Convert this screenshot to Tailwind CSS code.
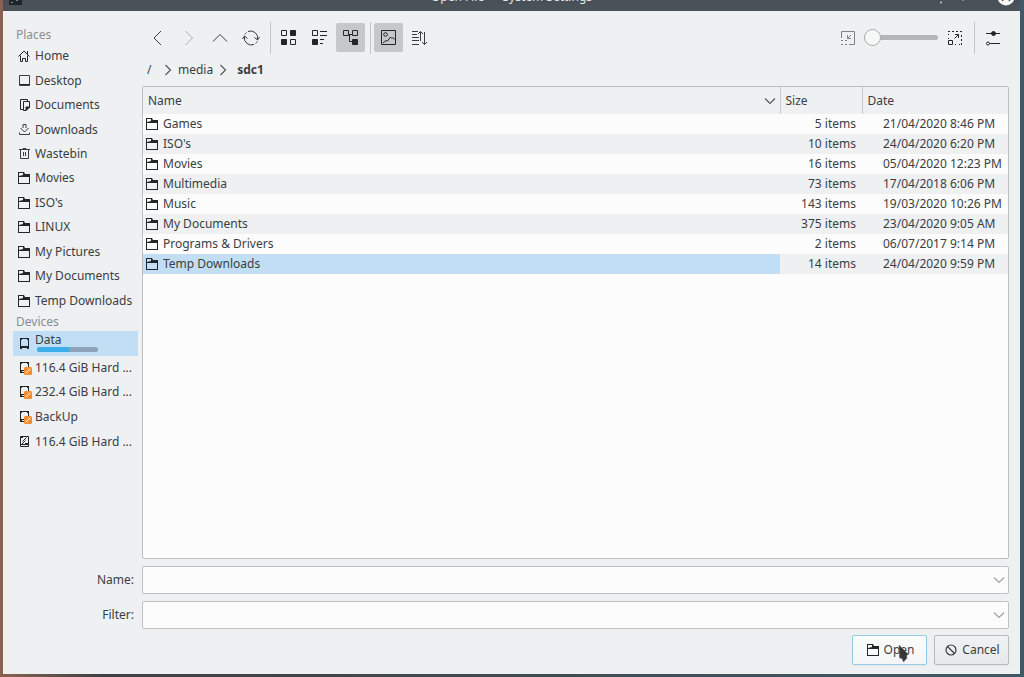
<!DOCTYPE html>
<html lang="en">
<head>
    <meta charset="UTF-8">
    <meta name="viewport" content="width=device-width, initial-scale=1.0">
    <title>Open File — System Settings</title>
    <script src="https://cdn.jsdelivr.net/npm/@tailwindcss/browser@4"></script>
</head>
<body class="h-screen overflow-hidden flex flex-col bg-linear-to-r from-[#8a6251] from-0% via-[#3f4043] via-10% to-[#3f5a66] pl-[3px] pr-1 pb-[3px] font-['Noto_Sans',sans-serif] text-[12px] leading-[18px] text-[#3a3e42]">

    <!-- Shared icons -->
    <svg class="hidden">
        <symbol id="folder" viewBox="0 0 16 16">
            <path fill="#232629" fill-rule="evenodd" d="M2 2h6l1 2h5v10H2zM3 3v3l4-1V3zM3 7v6h10V7z"/>
        </symbol>
        <symbol id="chevron-right" viewBox="0 0 16 16">
            <path fill="none" stroke="#55595c" stroke-width="1.200" d="M5.500 3l5 5-5 5"/>
        </symbol>
        <symbol id="chevron-down" viewBox="0 0 16 16">
            <path fill="none" stroke="currentColor" stroke-width="1.200" d="M3 5.500l5 5 5-5"/>
        </symbol>
        <symbol id="drive" viewBox="0 0 16 16">
            <path fill="none" stroke="#232629" d="M4.500 3.500h8v9h-8z"/>
            <path fill="#232629" d="M4 3h2v2H4zM11 3h2v2h-2zM4 11h9v1H4zM4 12h2v2H4zM11 12h2v2h-2z"/>
        </symbol>
        <symbol id="drive-unmounted" viewBox="0 0 16 16">
            <path fill="none" stroke="#232629" d="M9 12.500H4.500v-10h8V7"/>
            <path fill="#232629" d="M4 2h2v2H4zM11 2h2v2h-2zM4 10h4v1H4zM4 11h2v2H4z"/>
            <rect x="8" y="7" width="8" height="8" rx="1.500" fill="#f48a2a"/>
            <path stroke="#fde3c8" d="M9.500 13.500l5-5"/>
            <path stroke="#fde3c8" stroke-width=".800" d="M9.500 11l2.500 2.500M12 8.500l2.500 2.500"/>
        </symbol>
    </svg>

    <!-- Title bar -->
    <header class="relative h-[11px] shrink-0 overflow-hidden flex items-end justify-center pb-[5px] bg-linear-to-b from-[#475057] to-[#4b5359] text-[#e4e6e8]">
        <h1>Open File — System Settings</h1>
        <svg class="absolute left-1 top-0" width="16" height="6" viewBox="0 0 16 6">
            <path fill="#1f2528" d="M2 0h13v5H2z"/>
            <path fill="#7d868b" d="M4 2h2v1H4zM9 0h2v1H9z"/>
        </svg>
        <svg class="absolute right-1 top-0" width="84" height="8" viewBox="0 0 84 8">
            <circle cx="9" cy="2.500" r="1" fill="#c9cdd0"/>
            <circle cx="31" cy="0" r="1" fill="#9da3a7"/>
            <circle cx="74" cy="-3" r="8.500" fill="#fcfcfc"/>
            <path stroke="#4b5359" stroke-width="1.200" d="M74-3l4 4M74-3l-4 4"/>
        </svg>
    </header>

    <div class="flex-1 min-h-0 flex flex-col bg-[#eef0f2] pt-3 pl-[10px] pr-[11px] pb-[9px]">
        <div class="flex-1 min-h-0 grid grid-cols-[125px_minmax(0,1fr)] gap-x-1">

            <!-- Places -->
            <nav class="pt-[3px]">
                <h2 class="pl-[3px] text-[#8b8e91]">Places</h2>
                <ul class="h-[269px] grid auto-rows-fr">
                    <li><a href="#" class="h-full flex items-center gap-[3px] pl-[3px]">
                        <svg class="size-4" viewBox="0 0 16 16" fill="none" stroke="#232629"><path d="M2.500 8.500L8 3l5.500 5.500M4.500 7.500v6h2v-3h3v3h2v-6M11.500 3v3"/></svg>
                        Home</a></li>
                    <li><a href="#" class="h-full flex items-center gap-[3px] pl-[3px]">
                        <svg class="size-4" viewBox="0 0 16 16" fill="none" stroke="#3a3e42"><path d="M3.500 2.500h10v10h-10z"/><path stroke="#232629" d="M3 11.500h11"/></svg>
                        Desktop</a></li>
                    <li><a href="#" class="h-full flex items-center gap-[3px] pl-[3px]">
                        <svg class="size-4" viewBox="0 0 16 16" fill="none" stroke="#232629"><path d="M7 12.500H4.500v-10h7V4"/><path d="M7.500 4.500h6V10L10 13.500H7.500z"/><path fill="#232629" d="M10 13.500V10h3.500z"/></svg>
                        Documents</a></li>
                    <li><a href="#" class="h-full flex items-center gap-[3px] pl-[3px]">
                        <svg class="size-4" viewBox="0 0 16 16" fill="none" stroke="#3a3e42"><path d="M7 6V2.500h3V6M4.500 6l4 4 4-4M3.500 10.500v2h10v-2"/></svg>
                        Downloads</a></li>
                    <li><a href="#" class="h-full flex items-center gap-[3px] pl-[3px]">
                        <svg class="size-4" viewBox="0 0 16 16" fill="none" stroke="#3a3e42"><path d="M3 3.500h11M4.500 3.500v9h8v-9M7 3V2.500h3V3M7.500 6v4M9.500 6v4"/></svg>
                        Wastebin</a></li>
                    <li><a href="#" class="h-full flex items-center gap-[3px] pl-[3px]"><svg class="size-4"><use href="#folder"/></svg>Movies</a></li>
                    <li><a href="#" class="h-full flex items-center gap-[3px] pl-[3px]"><svg class="size-4"><use href="#folder"/></svg>ISO's</a></li>
                    <li><a href="#" class="h-full flex items-center gap-[3px] pl-[3px]"><svg class="size-4"><use href="#folder"/></svg>LINUX</a></li>
                    <li><a href="#" class="h-full flex items-center gap-[3px] pl-[3px]"><svg class="size-4"><use href="#folder"/></svg>My Pictures</a></li>
                    <li><a href="#" class="h-full flex items-center gap-[3px] pl-[3px]"><svg class="size-4"><use href="#folder"/></svg>My Documents</a></li>
                    <li><a href="#" class="h-full flex items-center gap-[3px] pl-[3px] whitespace-nowrap"><svg class="size-4 shrink-0"><use href="#folder"/></svg>Temp Downloads</a></li>
                </ul>
                <h2 class="pl-[3px] text-[#8b8e91]">Devices</h2>
                <ul class="h-[123px] grid auto-rows-fr">
                    <li><a href="#" class="h-full flex items-center gap-[3px] pl-[3px] bg-[#c1def4]">
                        <svg class="size-4"><use href="#drive"/></svg>
                        <span class="flex flex-col pb-0.5">
                            <span class="leading-[14px]">Data</span>
                            <span class="ml-0.5 w-[61px] h-[5px] rounded-full overflow-hidden bg-[#8fa3b8]"><span class="block h-full bg-[#3daee9]" style="width: 52%"></span></span>
                        </span></a></li>
                    <li><a href="#" class="h-full flex items-center gap-[3px] pl-[3px] whitespace-nowrap"><svg class="size-4 shrink-0"><use href="#drive-unmounted"/></svg>116.4 GiB Hard ...</a></li>
                    <li><a href="#" class="h-full flex items-center gap-[3px] pl-[3px] whitespace-nowrap"><svg class="size-4 shrink-0"><use href="#drive-unmounted"/></svg>232.4 GiB Hard ...</a></li>
                    <li><a href="#" class="h-full flex items-center gap-[3px] pl-[3px]"><svg class="size-4"><use href="#drive-unmounted"/></svg>BackUp</a></li>
                    <li><a href="#" class="h-full flex items-center gap-[3px] pl-[3px] whitespace-nowrap">
                        <svg class="size-4 shrink-0" viewBox="0 0 16 16" fill="none" stroke="#232629"><path d="M4.500 2.500h8v10h-8zM4.500 10.500h8M10.500 3.500l-4 4M9.500 6.500l-4 4"/><path d="M5 3.500h2M9 9.500h3"/></svg>
                        116.4 GiB Hard ...</a></li>
                </ul>
            </nav>

            <div class="min-h-0 flex flex-col">
                <!-- Toolbar -->
                <div class="flex items-center gap-0.5 h-[29px] pl-px pr-0.5">
                    <button aria-label="Back" class="size-[29px] grid place-items-center">
                        <svg class="size-[22px]" viewBox="0 0 22 22" fill="none" stroke="#3a3e42"><path d="M14 4l-7 7 7 7"/></svg>
                    </button>
                    <button aria-label="Forward" class="size-[29px] grid place-items-center">
                        <svg class="size-[22px]" viewBox="0 0 22 22" fill="none" stroke="#aaadaf"><path d="M7.500 4l7 7-7 7"/></svg>
                    </button>
                    <button aria-label="Up" class="size-[29px] grid place-items-center">
                        <svg class="size-[22px]" viewBox="0 0 22 22" fill="none" stroke="#3a3e42"><path d="M4 14.500l7-7 7 7"/></svg>
                    </button>
                    <button aria-label="Reload" class="size-[29px] grid place-items-center">
                        <svg class="size-[22px]" viewBox="0 0 22 22" fill="none" stroke="#3a3e42"><path d="M8 4.500A7 7 0 0 1 17.500 12.500M14 17.500A7 7 0 0 1 4.500 9.500M14.500 10.500l3 2.500 2-3M2.500 12l2-3 3 2.500"/><path d="M4.800 7.500A7 7 0 0 1 6.500 5.500M17.200 14.500A7 7 0 0 1 15.500 16.500"/></svg>
                    </button>
                    <span class="w-px h-8 ml-[3px] mr-px bg-[#c2c4c6]"></span>
                    <button aria-label="Icons view" class="size-[29px] grid place-items-center">
                        <svg class="size-[22px]" viewBox="0 0 22 22" fill="none" stroke="#232629"><path d="M3.500 3.500h5v5h-5zM12.500 12.500h5v5h-5z"/><path fill="#232629" d="M12.500 3.500h5v5h-5zM3.500 12.500h5v5h-5z"/></svg>
                    </button>
                    <button aria-label="Compact view" class="size-[29px] grid place-items-center">
                        <svg class="size-[22px]" viewBox="0 0 22 22" fill="none" stroke="#232629"><path d="M3.500 3.500h5v5h-5zM11 4.500h7M11 8.500h7M11 12.500h4M11 16.500h3"/><path fill="#232629" d="M3.500 12.500h5v5h-5z"/></svg>
                    </button>
                    <button aria-label="Details view" aria-pressed="true" class="size-[29px] grid place-items-center rounded-xs bg-[#c5c7c8]">
                        <svg class="size-[22px]" viewBox="0 0 22 22" fill="none" stroke="#232629"><path d="M3.500 3.500h5v5h-5zM12.500 3.500h5v5h-5zM8.500 7.500h4M9.500 7.500v7h3"/><path fill="#232629" d="M12.500 12.500h5v5h-5z"/></svg>
                    </button>
                    <span class="w-px h-8 ml-[3px] mr-px bg-[#c2c4c6]"></span>
                    <button aria-label="Preview" aria-pressed="true" class="size-[29px] grid place-items-center rounded-xs bg-[#c5c7c8]">
                        <svg class="size-[22px]" viewBox="0 0 22 22" fill="none" stroke="#232629"><path d="M3.500 3.500h14v14h-14z"/><circle cx="7.500" cy="7.500" r="1.800"/><path d="M5 16l3-2.500 1.500.500 3-4 1.500 1.500 1-1 1.500 2"/></svg>
                    </button>
                    <button aria-label="Sort" class="size-[29px] grid place-items-center">
                        <svg class="size-[22px]" viewBox="0 0 22 22" fill="none" stroke="#3a3e42"><path d="M3 4.500h6M3 7.500h5M3 10.500h7M3 13.500h7M3 17.500h7M11.500 14V4.500M9 7l2.500-2.500L14 7M15.500 5v12.500M13 15l2.500 2.500L18 15"/></svg>
                    </button>

                    <div class="ml-auto flex items-center">
                        <svg class="size-[22px]" viewBox="0 0 22 22" fill="none" stroke="#808386"><path d="M4.500 11V4.500h13v13H12"/><path stroke-dasharray="2 2" d="M4 13.500h6M4 17.500h6"/><path d="M14 8l-3.500 3.500M10.500 8v3.500H14"/></svg>
                        <input type="range" aria-label="Icon size" min="0" max="100" value="0" class="ml-[5px] w-[74px] h-[18px] appearance-none bg-transparent [&::-webkit-slider-runnable-track]:h-[5px] [&::-webkit-slider-runnable-track]:rounded-full [&::-webkit-slider-runnable-track]:bg-[#b4b5b6] [&::-webkit-slider-thumb]:appearance-none [&::-webkit-slider-thumb]:size-[17px] [&::-webkit-slider-thumb]:-mt-1.5 [&::-webkit-slider-thumb]:rounded-full [&::-webkit-slider-thumb]:border [&::-webkit-slider-thumb]:border-[#a9abad] [&::-webkit-slider-thumb]:bg-[#f6f7f7]">
                        <svg class="ml-1.5 size-[22px]" viewBox="0 0 22 22" fill="none" stroke="#232629"><path stroke-dasharray="2 2" d="M4 4.500h14M17.500 8v10"/><path stroke-dasharray="1 3" d="M4.500 7v5M11 17.500h5"/><path d="M4.500 13.500h4v4h-4zM10.500 11.500l4-4M11 7.500h3.500V11"/></svg>
                    </div>
                    <span class="w-px h-8 ml-1.5 mr-px bg-[#c2c4c6]"></span>
                    <button aria-label="Options" class="size-[29px] grid place-items-center">
                        <svg class="size-[22px]" viewBox="0 0 22 22" fill="none" stroke="#232629"><path d="M4 6.500h14M8 16.500h10"/><circle cx="11.500" cy="6.500" r="2" fill="#232629"/><circle cx="6" cy="16.500" r="1.500"/></svg>
                    </button>
                </div>

                <!-- Breadcrumb -->
                <nav class="flex items-center h-[34px] pl-[5px] pt-0.5">
                    <a href="#" class="w-[13px]">/</a>
                    <svg class="size-4"><use href="#chevron-right"/></svg>
                    <a href="#" class="ml-0.5">media</a>
                    <svg class="size-4 ml-0.5 mr-1.5"><use href="#chevron-right"/></svg>
                    <a href="#" class="font-bold">sdc1</a>
                </nav>

                <!-- File list -->
                <div class="flex-1 min-h-0 overflow-hidden border border-[#bcbec0] rounded-xs bg-[#fcfcfc]">
                    <table class="w-full table-fixed border-collapse whitespace-nowrap">
                        <colgroup>
                            <col>
                            <col class="w-[82px]">
                            <col class="w-[146px]">
                        </colgroup>
                        <thead>
                            <tr class="h-[27px] bg-[#eef0f2] text-left">
                                <th class="pl-[5px] pr-0.5 font-normal"><button class="w-full flex items-center justify-between">Name<svg class="size-4 text-[#55595c]"><use href="#chevron-down"/></svg></button></th>
                                <th class="pl-[5px] font-normal border-l border-[#c9cbcd]"><button>Size</button></th>
                                <th class="pl-[5px] font-normal border-l border-[#c9cbcd]"><button>Date</button></th>
                            </tr>
                        </thead>
                        <tbody>
                            <tr class="h-5 even:bg-[#eef0f2]">
                                <td class="pl-px"><div class="flex items-center gap-[3px]"><svg class="size-4"><use href="#folder"/></svg>Games</div></td>
                                <td class="text-right pr-1.5">5 items</td>
                                <td class="pl-[21px]">21/04/2020 8:46 PM</td>
                            </tr>
                            <tr class="h-5 even:bg-[#eef0f2]">
                                <td class="pl-px"><div class="flex items-center gap-[3px]"><svg class="size-4"><use href="#folder"/></svg>ISO's</div></td>
                                <td class="text-right pr-1.5">10 items</td>
                                <td class="pl-[21px]">24/04/2020 6:20 PM</td>
                            </tr>
                            <tr class="h-5 even:bg-[#eef0f2]">
                                <td class="pl-px"><div class="flex items-center gap-[3px]"><svg class="size-4"><use href="#folder"/></svg>Movies</div></td>
                                <td class="text-right pr-1.5">16 items</td>
                                <td class="pl-[21px]">05/04/2020 12:23 PM</td>
                            </tr>
                            <tr class="h-5 even:bg-[#eef0f2]">
                                <td class="pl-px"><div class="flex items-center gap-[3px]"><svg class="size-4"><use href="#folder"/></svg>Multimedia</div></td>
                                <td class="text-right pr-1.5">73 items</td>
                                <td class="pl-[21px]">17/04/2018 6:06 PM</td>
                            </tr>
                            <tr class="h-5 even:bg-[#eef0f2]">
                                <td class="pl-px"><div class="flex items-center gap-[3px]"><svg class="size-4"><use href="#folder"/></svg>Music</div></td>
                                <td class="text-right pr-1.5">143 items</td>
                                <td class="pl-[21px]">19/03/2020 10:26 PM</td>
                            </tr>
                            <tr class="h-5 even:bg-[#eef0f2]">
                                <td class="pl-px"><div class="flex items-center gap-[3px]"><svg class="size-4"><use href="#folder"/></svg>My Documents</div></td>
                                <td class="text-right pr-1.5">375 items</td>
                                <td class="pl-[21px]">23/04/2020 9:05 AM</td>
                            </tr>
                            <tr class="h-5 even:bg-[#eef0f2]">
                                <td class="pl-px"><div class="flex items-center gap-[3px]"><svg class="size-4"><use href="#folder"/></svg>Programs &amp; Drivers</div></td>
                                <td class="text-right pr-1.5">2 items</td>
                                <td class="pl-[21px]">06/07/2017 9:14 PM</td>
                            </tr>
                            <tr class="h-5 even:bg-[#eef0f2]" aria-selected="true">
                                <td class="pl-px bg-[#c1def4]"><div class="flex items-center gap-[3px]"><svg class="size-4"><use href="#folder"/></svg>Temp Downloads</div></td>
                                <td class="text-right pr-1.5">14 items</td>
                                <td class="pl-[21px]">24/04/2020 9:59 PM</td>
                            </tr>
                        </tbody>
                    </table>
                </div>
            </div>
        </div>

        <!-- Name and filter -->
        <form class="mt-[7px] grid grid-cols-[121px_minmax(0,1fr)] gap-x-2 gap-y-[7px] items-center">
            <label for="file-name" class="text-right">Name:</label>
            <div class="flex items-center h-7 border border-[#bfc1c3] rounded-xs bg-[#fcfcfc] pr-px">
                <input id="file-name" type="text" class="flex-1 px-1.5 outline-none">
                <button type="button" aria-label="Recent names" class="text-[#a0a3a5]"><svg class="size-4"><use href="#chevron-down"/></svg></button>
            </div>
            <label for="file-filter" class="text-right">Filter:</label>
            <div class="flex items-center h-7 border border-[#bfc1c3] rounded-xs bg-[#fcfcfc] pr-px">
                <input id="file-filter" type="text" class="flex-1 px-1.5 outline-none">
                <button type="button" aria-label="Filters" class="text-[#a0a3a5]"><svg class="size-4"><use href="#chevron-down"/></svg></button>
            </div>
        </form>

        <div class="mt-1.5 flex justify-end gap-[7px]">
            <button class="relative w-[75px] h-[30px] flex items-center justify-center gap-[3px] border border-[#93cbe8] rounded-xs bg-linear-to-b from-[#fbfcfc] to-[#f4f5f6] shadow-xs">
                <svg class="size-4"><use href="#folder"/></svg>Open
                <svg class="absolute left-[45px] top-2" width="13" height="20" viewBox="0 0 13 20">
                    <path fill="#3a3536" stroke="#6d696a" stroke-width=".5" d="M1 1l9.500 9.500-2 1 .5 2.500-3.500 4-1.500-3.500L1.500 14z"/>
                </svg>
            </button>
            <button class="w-[75px] h-[30px] flex items-center justify-center gap-[3px] border border-[#b9bbbd] rounded-xs bg-linear-to-b from-[#f1f2f3] to-[#e7e8ea] shadow-xs">
                <svg class="size-4" viewBox="0 0 16 16" fill="none" stroke="#3a3e42" stroke-width="1.200"><circle cx="8" cy="8" r="5"/><path d="M4.500 4.500l7 7"/></svg>Cancel
            </button>
        </div>
    </div>
</body>
</html>
